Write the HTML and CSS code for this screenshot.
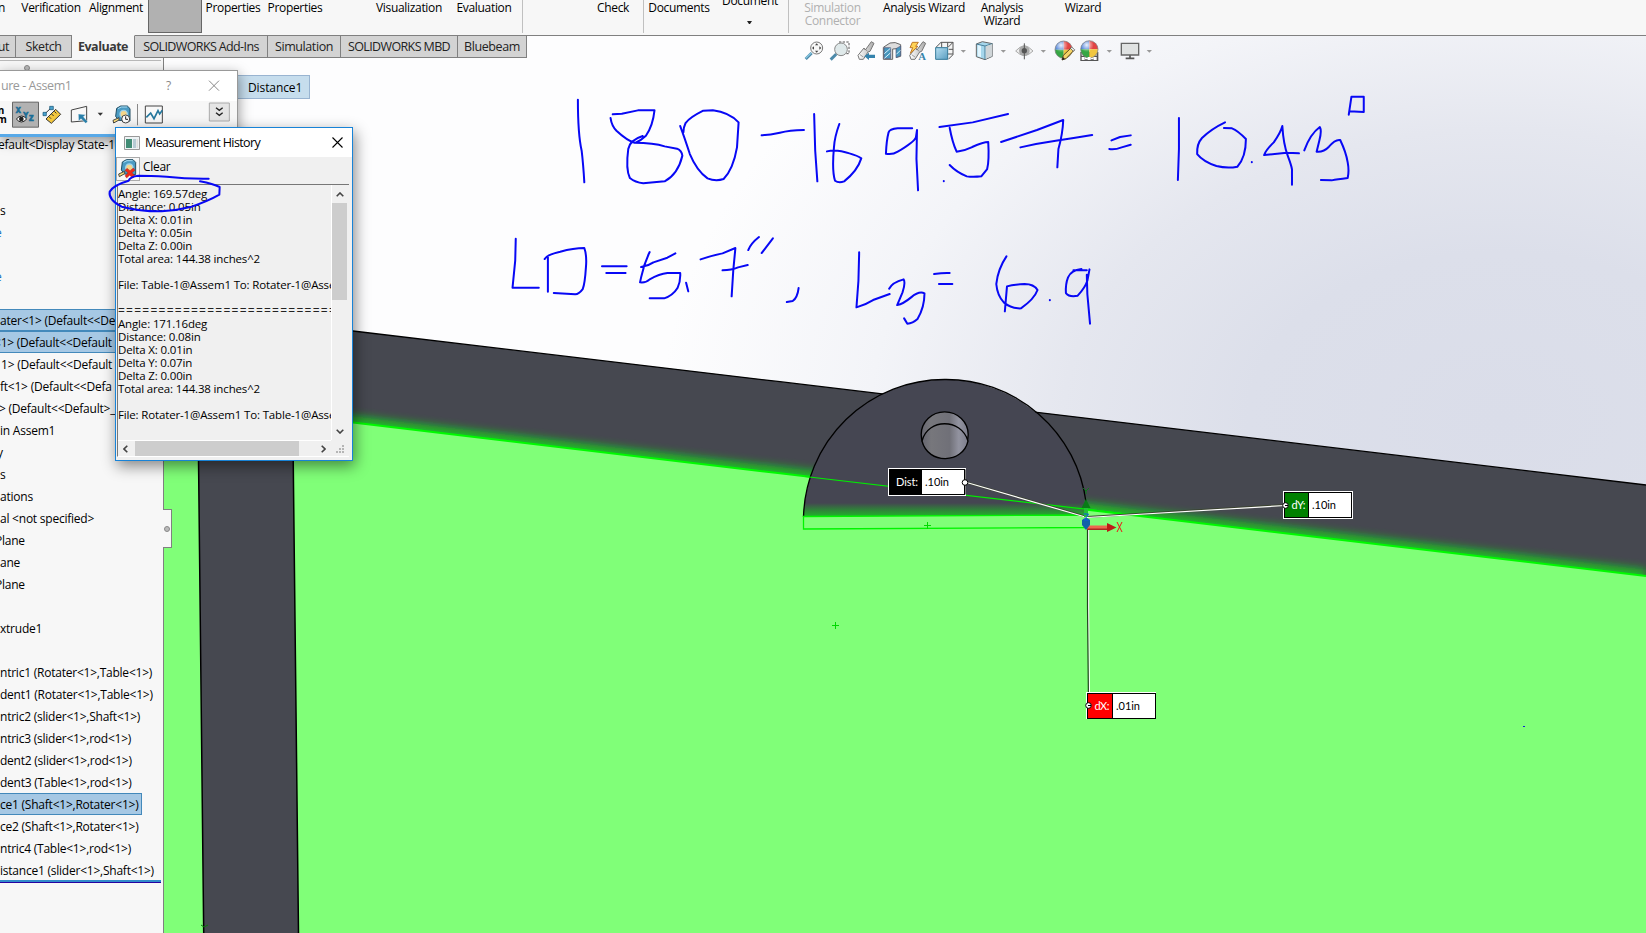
FILE: index.html
```html
<!DOCTYPE html>
<html lang="en">
<head>
<meta charset="utf-8">
<title>SOLIDWORKS - Assem1</title>
<link rel="stylesheet" href="styles.css">
</head>
<body>
<div class="app">
  <svg class="scene" viewBox="0 0 1646 933">
    <defs>
      <radialGradient id="bg" gradientUnits="userSpaceOnUse" cx="0" cy="0" r="1" gradientTransform="translate(1500 420) scale(840 560)">
        <stop offset="0" stop-color="#dadde9"/><stop offset=".3" stop-color="#dcdfea"/><stop offset=".52" stop-color="#e5e7ef"/><stop offset=".75" stop-color="#f3f4f8"/><stop offset="1" stop-color="#fdfdfe"/>
      </radialGradient>
      <linearGradient id="hole"><stop offset="0" stop-color="#65656f"/><stop offset=".2" stop-color="#77777c"/><stop offset=".6" stop-color="#707078"/><stop offset=".8" stop-color="#9293a0"/><stop offset="1" stop-color="#7c7d8b"/></linearGradient>
      <linearGradient id="plateGlow" x1="0" y1="0" x2="0" y2="1"><stop offset="0" stop-color="#00ff00" stop-opacity="0"/><stop offset="1" stop-color="#10e818" stop-opacity=".7"/></linearGradient>
      <filter id="soft" x="-5%" y="-50%" width="110%" height="200%"><feGaussianBlur stdDeviation="5"/></filter>
      <clipPath id="plate"><path d="M803.5 517A141 141 0 0 1 944.500 379.500A141 141 0 0 1 1086 517Z"/></clipPath>
    </defs>
    <rect width="1646" height="933" fill="url(#bg)"/>
    <path d="M164 308L353 331 780 381.700 1646 485V600H164Z" fill="#464850"/>
    <path d="M164 400L353 422.500 780 473.300 1380 544.500 1646 576" fill="none" stroke="#10e818" stroke-width="12" opacity=".8" filter="url(#soft)"/>
    <path d="M164 400L353 422.500 780 473.300 1380 544.500 1646 576V933H164Z" fill="#80ff78"/>
    <path d="M164 400L353 422.500 780 473.300 1380 544.500 1646 576" fill="none" stroke="#00fa00" stroke-width="2"/>
    <path d="M164 308L353 331 780 381.700 1646 485" fill="none" stroke="#000" stroke-width="1.300"/>
    <path d="M198.300 440L203.700 933H298.500L293 440Z" fill="#464850"/>
    <path d="M198.300 440L203.700 933M293 440L298.500 933" stroke="#000" stroke-width="1.500"/>
    <path d="M201 925l3 2 4-2" fill="none" stroke="#087a08"/>
    <path d="M803.500 517A141 141 0 0 1 944.500 379.500A141 141 0 0 1 1086 517Z" fill="#454652"/>
    <rect x="803" y="503" width="284" height="14" fill="url(#plateGlow)" clip-path="url(#plate)"/>
    <path d="M803.500 517A141 141 0 0 1 944.500 379.500A141 141 0 0 1 1086 502" fill="none" stroke="#000" stroke-width="1.300"/>
    <path d="M803.500 516.500L1087 515V527.500L803.500 529Z" fill="#80ff78" stroke="#00f500" stroke-width="1.300"/>
    <path d="M805 476.500L1140 515.500" stroke="#00ee00" stroke-width="1.200"/>
    <path d="M924 525.500h7m-3.500-3.500v7M832 625.500h7m-3.500-3.500v7" stroke="#00d800"/>
    <ellipse cx="944.700" cy="434.500" rx="23.500" ry="22.700" fill="url(#hole)" stroke="#000" stroke-width="1.300"/>
    <path d="M922 441C928 418 961 418 968 441C963 464 928 465 922 441Z" fill="url(#hole)" stroke="#000" stroke-width="1.300"/>
    <g fill="none">
      <path d="M965 482L1087 517L1285 505" stroke="#3b432f" stroke-width="2"/>
      <path d="M965 482L1087 517.500L1285 505.500" stroke="#fff" stroke-width="1.200"/>
      <path d="M1088.500 525V607L1089.500 705" stroke="#fff" stroke-width="1.300"/>
      <path d="M1087.500 525V607L1088.500 705" stroke="#22421f" stroke-width="1.200"/>
    </g>
    <path d="M1084 505h4v12h-4z" fill="#22c235"/><path d="M1081.500 508l4.500-9 4.500 9z" fill="#087b17"/>
    <path d="M1083 488l3 3 3-3m-3 3v3" stroke="#087b17" fill="none"/>
    <path d="M1087 525.500h22v4h-22z" fill="#ed684f"/><path d="M1087 528.500h22v1.500h-22z" fill="#a82a20"/><path d="M1107 523l9.500 4.500-9.500 4.500z" fill="#bd1a16"/>
    <path d="M1117 522l5 10m0-10l-5 10" stroke="#f21414" fill="none"/>
    <path d="M1082 520q4-4 8 0v5l-4 5-4-5z" fill="#1261a8"/><path d="M1083.500 514h5l-4 6h4" fill="none" stroke="#1057e9"/>
    <rect x="1523" y="726" width="2" height="1" fill="#1222d8"/>
    <g class="callout">
      <rect x="888.500" y="468.500" width="77" height="27" fill="#000" stroke="#fff"/><rect x="922" y="470" width="42" height="24" fill="#fff"/><path d="M922 469.500h43v25h-43" fill="none" stroke="#000"/>
      <text x="896" y="486" fill="#fff" textLength="22">Dist:</text><text x="925" y="486" textLength="24">.10in</text>
      <circle cx="965" cy="482.500" r="2.800" fill="#fff" stroke="#000"/>
      <rect x="1283.500" y="491.500" width="69" height="27" fill="#fff" stroke="#fff"/><rect x="1284.500" y="492.500" width="67" height="25" fill="#fff" stroke="#000"/><rect x="1285" y="493" width="23" height="24" fill="#008000"/><path d="M1308.500 492v26" stroke="#000"/>
      <text x="1291.500" y="509" fill="#fff" textLength="14">dY:</text><text x="1312" y="509" textLength="24">.10in</text>
      <circle cx="1285.500" cy="505.500" r="2.800" fill="#fff" stroke="#000"/><path d="M1285 505.500h3" stroke="#000"/>
      <rect x="1086.500" y="692.500" width="69" height="26" fill="#fff" stroke="#fff"/><rect x="1087.500" y="693.500" width="68" height="25" fill="#fff" stroke="#000"/><rect x="1088" y="694" width="24" height="24" fill="#f00"/><path d="M1112.500 693v26" stroke="#000"/>
      <text x="1094.500" y="710" fill="#fff" textLength="15">dX:</text><text x="1116" y="710" textLength="24">.01in</text>
      <circle cx="1088.500" cy="705.500" r="2.800" fill="#fff" stroke="#000"/><path d="M1088 705.500h3" stroke="#000"/>
    </g>
  </svg>

  <header class="ribbon">
    <span class="cut">n</span><span>Verification</span><span>Alignment</span><i class="pressed"></i><span>Properties</span><span>Properties</span>
    <b></b><span>Visualization</span><span>Evaluation</span><b></b><i class="sep"></i><b></b><span>Check</span><i class="sep"></i>
    <span>Documents</span><span class="raised">Document<em class="caret"></em></span><b></b><i class="sep"></i>
    <span class="off">Simulation<br>Connector</span><span>Analysis Wizard</span><span>Analysis<br>Wizard</span><b></b><span>Wizard</span>
  </header>
  <nav class="tabs">
    <span class="t0">ut</span><span class="t1">Sketch</span><span class="t2 active">Evaluate</span><span class="t3">SOLIDWORKS Add-Ins</span><span class="t4">Simulation</span><span class="t5">SOLIDWORKS MBD</span><span class="t6">Bluebeam</span>
  </nav>

  <svg class="headsup" viewBox="0 0 1095 105">
    <defs>
      <linearGradient id="steel"><stop offset="0" stop-color="#fff"/><stop offset="1" stop-color="#aaa"/></linearGradient>
      <linearGradient id="blue" x1="0" y1="0" x2="1" y2="1"><stop offset="0" stop-color="#b7e0f3"/><stop offset="1" stop-color="#5a9dc0"/></linearGradient>
      <radialGradient id="shine" cx=".35" cy=".25" r=".4"><stop offset="0" stop-color="#fff" stop-opacity=".9"/><stop offset="1" stop-color="#fff" stop-opacity="0"/></radialGradient>
      <g id="ball"><path d="M0 0V-26A26 26 0 0 0-26 0Z" fill="#3f78d8"/><path d="M0 0H26A26 26 0 0 0 0-26Z" fill="#e24343"/><path d="M0 0H-26A26 26 0 0 0 0 26Z" fill="#36a644"/><path d="M0 0V26A26 26 0 0 0 26 0Z" fill="#f0c640"/><circle r="26" fill="url(#shine)" stroke="#777" stroke-width="2"/></g>
      <g id="pipe"><path d="M-24 14L-6-8-2-2 16-27 24-22 12 2 6 4-8 26-20 26Z" fill="url(#steel)" stroke="#777" stroke-width="3"/><path d="M-18 12l10 7M-5-6l10 8" stroke="#777" stroke-width="2"/></g>
      <path id="dd" d="M-8-3h16l-8 8z" fill="#999"/>
    </defs>
    <path d="M32 72L50 54" stroke="#4d8aaa" stroke-width="9"/><path d="M32 70L49 53" stroke="#86c4df" stroke-width="4"/>
    <circle cx="65" cy="39" r="18" fill="#f7f7f7" stroke="#777" stroke-width="3"/><path d="M65 25l5 6H60zM65 53l5-6H60zM51 39l6-5v10zM79 39l-6-5v10z" fill="#444"/>
    <path d="M132 21h30v35h-9" fill="none" stroke="#555" stroke-width="3" stroke-dasharray="7 4"/><path d="M107 74L124 57" stroke="#4d8aaa" stroke-width="9"/><circle cx="138" cy="43" r="19" fill="#dfe9ea" stroke="#888" stroke-width="3"/>
    <use href="#pipe" x="213" y="47"/><path d="M208 64l14-11v6h18v10h-18v6z" fill="#3583ad"/>
    <path d="M265 37l20-13q15-5 32 5v35l-12 3V41l-12 1v31h-28z" fill="#ddd" stroke="#666" stroke-width="3"/><path d="M267 38h20v33h-20zM303 41l14-8v29l-14 6z" fill="#4797bd" stroke="#557" stroke-width="2"/><path d="M268 56l18-16M268 70l18-16M304 58l12-12" stroke="#d8f1ff" stroke-width="3"/>
    <use href="#pipe" x="368" y="47"/><path d="M352 22h18l-8 12h7L346 55l7-17h-8z" fill="#ffd355" stroke="#bf7926" stroke-width="3"/><text x="370" y="75" class="iconA">A</text>
    <path d="M422 38l16-16h36v37l-14 14" fill="#f5f5f5" stroke="#555" stroke-width="3"/><path d="M459 37l15-15M459 57h15M440 22v15M458 22v15M461 43h13" stroke="#555" stroke-width="3"/><path d="M422 38h36v35h-36z" fill="url(#blue)" stroke="#347a9a" stroke-width="3"/>
    <use href="#dd" x="505" y="48"/>
    <g transform="translate(540)">
      <path d="M4 27l18-7 30 6v38l-22 10-26-9z" fill="#a5d6ec" stroke="#666" stroke-width="3"/><path d="M4 27l26 6 22-7M30 33v41" fill="none" stroke="#4a7f99" stroke-width="3"/><path d="M32 34l20-7v36l-20 9z" fill="#cfd5d8"/><path d="M8 30l10 3v34l-10-3z" fill="#e2f6ff"/>
      <use href="#dd" x="85" y="48"/><path d="M122 48q26-30 52 0-26 27-52 0z" fill="#eee" stroke="#aaa" stroke-width="3"/><circle cx="148" cy="47" r="16" fill="#aaa"/><path d="M148 25v48" stroke="#555" stroke-width="3"/><circle cx="148" cy="47" r="8" fill="#555"/>
      <use href="#dd" x="205" y="48"/><use href="#ball" x="266" y="44"/><path d="M261 75l4-14 24-23 8 8-24 25z" fill="#f5d367" stroke="#55451c" stroke-width="3"/><path d="M286 40l4-4 9 8-4 5z" fill="#eee" stroke="#444" stroke-width="2"/><path d="M261 75l3-9 6 6z" fill="#222"/>
      <path d="M316 51h54v27h-54z" fill="#555"/><path d="M320 54h9v8h-9zM356 54h9v8h-9zM330 64h9v9h-9zM347 64h9v9h-9z" fill="#fff"/><use href="#ball" x="343" y="43"/>
      <path d="M320 66h9v9h-9zM338 66h9v9h-9zM356 66h9v9h-9z" fill="#fff"/>
      <use href="#dd" x="403" y="48"/><path d="M439 25h52v35h-52z" fill="#e0e2e2" stroke="#666" stroke-width="4"/><path d="M465 61v9M452 70h26" stroke="#555" stroke-width="5"/><use href="#dd" x="523" y="48"/>
    </g>
  </svg>

  <aside class="panel">
    <div class="splitter"><i class="dot"></i></div>
    <ul class="tree">
      <li class="n2">efault&lt;Display State-1</li><li></li><li></li><li>s</li><li class="link">e</li><li></li><li class="link">e</li><li></li>
      <li class="sel wide">ater&lt;1&gt; (Default&lt;&lt;De</li><li class="sel wide n5">&lt;1&gt; (Default&lt;&lt;Default</li><li class="p1">1&gt; (Default&lt;&lt;Default</li><li>ft&lt;1&gt; (Default&lt;&lt;Defa</li><li class="n1">&gt; (Default&lt;&lt;Default&gt;_</li>
      <li>in Assem1</li><li class="n3">y</li><li>s</li><li>ations</li><li>al &lt;not specified&gt;</li><li class="n4">Plane</li><li>ane</li><li class="n4">Plane</li><li></li><li>xtrude1</li><li></li>
      <li>ntric1 (Rotater&lt;1&gt;,Table&lt;1&gt;)</li><li>dent1 (Rotater&lt;1&gt;,Table&lt;1&gt;)</li><li>ntric2 (slider&lt;1&gt;,Shaft&lt;1&gt;)</li><li>ntric3 (slider&lt;1&gt;,rod&lt;1&gt;)</li><li>dent2 (slider&lt;1&gt;,rod&lt;1&gt;)</li><li>dent3 (Table&lt;1&gt;,rod&lt;1&gt;)</li>
      <li class="sel fit">ce1 (Shaft&lt;1&gt;,Rotater&lt;1&gt;)</li><li>ce2 (Shaft&lt;1&gt;,Rotater&lt;1&gt;)</li><li>ntric4 (Table&lt;1&gt;,rod&lt;1&gt;)</li><li>istance1 (slider&lt;1&gt;,Shaft&lt;1&gt;)</li>
    </ul>
    <div class="rollback"></div>
  </aside>
  <div class="handle"><i class="dot"></i></div>

  <div class="mate">Distance1</div>

  <section class="measure">
    <div class="mtitle"><span>ure - Assem1</span></div>
    <svg viewBox="0 31 714 192">
      <text x="498" y="88" class="q">?</text><path d="M627 60l30 30m0-30l-30 30" stroke="#888" stroke-width="3"/>
      <text x="-7" y="161" class="unit">n</text><text x="-9" y="188" class="unit">m</text>
      <path d="M37.500 124.500h78v75h-78z" fill="#b2b2b2" stroke="#666" stroke-width="3"/>
      <text x="47" y="158" class="xyz">X</text><text x="70" y="171" class="xyz">Y</text><text x="86" y="182" class="xyz">Z</text>
      <path d="M49 175q16-18 31 0-16 18-31 0z" fill="#fff" stroke="#222" stroke-width="3"/><circle cx="64" cy="175" r="7" fill="#222"/>
      <path d="M138 175l29-29 15 15-28 27z" fill="#f3c63c" stroke="#333" stroke-width="3"/><path d="M147 168l6 6m2-14l6 6m2-14l6 6" stroke="#333" stroke-width="3"/><path d="M134 160l21-20" stroke="#333" stroke-width="3"/><path d="M129 155h10v10h-10zM149 137h11v10h-11z" fill="#4aa3cf" stroke="#16516f" stroke-width="2"/>
      <path d="M214 148l46-11v43l-46 4z" fill="#f7f7f7" stroke="#444" stroke-width="3"/><path d="M235 160l22 2-7 6 13 15-6 5-14-14-7 7z" fill="#287fa9" stroke="#f7f7f7"/>
      <path d="M293 156h16l-8 9z" fill="#333"/>
      <g id="tape"><path d="M350 143l12-7h20l8 8v37l-34-2-9-12z" fill="#4b9bc3" stroke="#234f65" stroke-width="3"/><path d="M354 144l10-5h17" fill="none" stroke="#a9dcf2" stroke-width="3"/><circle cx="371" cy="160" r="11" fill="#f4d58a" stroke="#9fd2ea" stroke-width="4"/><path d="M339 179l18-8v7l-16 9z" fill="#ffe07a" stroke="#444" stroke-width="3"/></g>
      <circle cx="377" cy="175" r="12" fill="#fff" stroke="#444" stroke-width="3"/><path d="M377 167v9h7" stroke="#222" stroke-width="3" fill="none"/>
      <path d="M412.500 130v64" stroke="#888" stroke-width="3"/>
      <path d="M436 136h51v51h-51z" fill="#f8f8f8" stroke="#444" stroke-width="3"/><path d="M439 170l13-13 10 17 12-24 5 10 8-11" fill="none" stroke="#24779d" stroke-width="5"/>
      <path d="M628 127h60v54h-60z" fill="#e5e5e5" stroke="#aaa" stroke-width="3"/><path d="M648 141l10 8 10-8m-20 15l10 8 10-8" fill="none" stroke="#222" stroke-width="4"/>
    </svg>
  </section>

  <section class="history">
    <div class="htitle">
      <svg class="hicon" viewBox="0 0 16 14"><path d="M.5.500h15v13H.500z" fill="#eef3f5" stroke="#999"/><path d="M2 3h6v9H2z" fill="#418c75"/><path d="M9 3h3v9H9z" fill="#b6cbd4"/><path d="M12.500 3H14v9h-1.500z" fill="#ddd"/></svg>
      <span>Measurement History</span>
      <svg class="hclose" viewBox="0 0 11 11"><path d="M.5.500l10 10m0-10l-10 10" stroke="#000" stroke-width="1.100"/></svg>
    </div>
    <div class="hbar"><span class="clearbtn"><svg viewBox="334 132 66 64"><use href="#tape"/><path d="M364 162l9 7 10-8 5 7-9 7 9 9-7 7-9-8-9 8-5-7 9-8-9-8z" fill="#ed2c1a" stroke="#8d1308"/></svg></span><span>Clear</span></div>
    <div class="hbody">
      <pre>Angle: 169.57deg
Distance: 0.05in
Delta X: 0.01in
Delta Y: 0.05in
Delta Z: 0.00in
Total area: 144.38 inches^2

File: Table-1@Assem1 To: Rotater-1@Asse

<span class="rule">===========================</span>
Angle: 171.16deg
Distance: 0.08in
Delta X: 0.01in
Delta Y: 0.07in
Delta Z: 0.00in
Total area: 144.38 inches^2

File: Rotater-1@Assem1 To: Table-1@Asse</pre>
      <div class="vscroll"><svg viewBox="0 0 8 5"><path d="M.7 4.300L4 1l3.300 3.300"/></svg><i></i><svg viewBox="0 0 8 5"><path d="M.7.700L4 4 7.300.700"/></svg></div>
      <div class="hscroll"><svg viewBox="0 0 5 8"><path d="M4.300.700L1 4l3.300 3.300"/></svg><i></i><svg viewBox="0 0 5 8"><path d="M.7.700L4 4 .7 7.300"/></svg></div>
      <svg class="grip" viewBox="0 0 8 8"><path d="M6 0h2v2H6zM3 3h2v2H3zM6 3h2v2H6zM0 6h2v2H0zM3 6h2v2H3zM6 6h2v2H6z"/></svg>
    </div>
  </section>

  <svg class="ink" viewBox="0 0 1646 933">
    <g transform="translate(549.500 80.700) scale(.5357 .33333)">
      <path d="M53 57Q53 160 60 210Q63 250 65 305"/>
      <path d="M118 101L135 99 165 89 196 89Q193 135 180 165Q170 180 160 187Q145 180 125 150Q116 135 114 112M174 166Q150 178 147 205Q142 265 150 292Q160 305 175 308L215 302Q240 280 248 225Q247 210 238 204L215 197Q195 186 158 186"/>
      <path d="M244 136Q252 170 262 220Q275 270 295 293Q310 303 325 295Q343 265 350 200L353 125Q335 95 305 89L287 90Q262 110 254 127Q250 140 250 155"/>
      <path d="M396 164Q412 163 430 156T475 148M494 100L496 210 500 302M541 130Q532 170 531 200Q527 270 533 300Q540 308 550 302Q575 270 582 233Q575 225 560 218Q535 204 518 212"/>
      <path d="M677 143H650Q635 145 633 155Q629 180 628 219Q640 223 650 213Q680 185 684 170L686 148 685 235 688 329M736 301v1"/>
      <path d="M728 139L790 125 856 100M747 141Q752 185 760 213Q775 210 789 199Q810 184 819 184Q821 240 817 265L806 287Q790 290 779 287Q760 275 747 253"/>
      <path d="M843 184L910 148 959 118Q958 160 950 205L948 260M879 200Q910 188 945 180T1013 163"/>
      <path d="M1049 179L1065 169 1085 164M1045 205Q1055 208 1068 200L1085 192M1175 112V205L1173 298"/>
      <path d="M1261 125Q1235 145 1218 172Q1208 190 1209 220Q1220 242 1245 256Q1265 264 1284 258Q1300 230 1300 175Q1285 150 1274 143L1259 142M1311 244v1"/>
      <path d="M1399 218L1376 216 1334 223Q1337 208 1352 185Q1365 155 1368 136Q1370 190 1378 225Q1385 255 1386 266V312M1409 209Q1420 160 1438 139Q1442 150 1437 180L1432 213Q1445 215 1455 198Q1467 175 1476 178Q1487 215 1490 245Q1493 270 1490 292Q1470 296 1460 299L1440 298"/>
      <path d="M1492 102L1497 48H1520V94L1493 92"/>
      <path d="M-63 474L-64 540-69 621H-20M-3 530V633M-9 535Q-5 522 20 513Q45 502 65 502Q70 525 68 560Q66 610 62 625Q55 640 48 641L8 637"/>
      <path d="M98 557h46M106 577h36M187 514Q176 550 171 590L169 605Q180 607 187 596Q205 580 220 577H244Q245 600 239 622Q230 645 214 653H187M171 559Q184 556 194 545L220 531 235 518M255 606L259 632"/>
      <path d="M282 536Q305 524 323 518L347 502 343 570 340 647M323 569Q340 568 352 560L370 553M391 469Q376 488 371 508M417 473L396 517M465 622Q463 650 454 661L443 664"/>
      <path d="M578 515Q578 600 573 680Q590 672 604 658L635 640M634 624Q640 605 661 596Q665 605 659 635L649 673Q660 670 675 650T700 638Q700 680 687 715Q678 728 668 729L662 713M718 580Q735 576 747 577M727 610h25"/>
      <path d="M853 527Q837 565 834 610Q836 645 848 665Q862 684 880 683Q905 655 911 628Q904 610 887 610Q865 612 854 617L850 692M934 658v1"/>
      <path d="M1003 569H978M993 565Q974 568 968 590Q963 610 964 637Q970 650 986 645Q1000 620 1004 600L1008 566M1003 582L1004 640 1009 729"/>
    </g>
    <g transform="translate(0 60) scale(.33333)"><path d="M626 356Q560 357 500 350Q450 347 415 347Q390 350 386 362Q340 375 329 395Q325 420 365 440Q425 455 485 454Q530 451 575 440Q625 423 658 404L659 381Q640 372 600 364"/></g>
  </svg>
</div>
</body>
</html>
```
FILE: styles.css
```css
* { box-sizing: border-box; }
body { margin: 0; overflow: hidden; font: 12px/14px "Open Sans", "Noto Sans", sans-serif; color: #000; }
.app { position: relative; width: 1646px; height: 933px; overflow: hidden; }
.scene { position: absolute; inset: 0; width: 1646px; height: 933px; }
.callout text { font: 11px Lato, sans-serif; }

.ribbon { position: relative; height: 36px; background: #f7f7f7; border-bottom: 1px solid #808080; overflow: hidden; display: grid;
  grid-template-columns: 18px 66px 64px 54px 62px 62px 43px 80px 70px 3px 1px 60px 60px 1px 70px 72px 2px 1px 87px 96px 60px 21px 60px; }
.ribbon span { text-align: center; white-space: nowrap; line-height: 13px; padding-top: 1px; letter-spacing: -.32px; justify-self: center; }
.ribbon .cut { justify-self: start; margin-left: -2px; }
.ribbon .off { color: #b0b0b0; }
.ribbon .raised { margin-top: -7px; }
.pressed { height: 33px; background: #b1b1b1; border: 1px solid #666; border-top: 0; }
.sep { height: 33px; background: #c0c0c0; }
.caret { display: block; margin: 14px auto 0; width: 5px; border: 2.500px solid transparent; border-top: 3px solid #222; border-bottom: 0; transform: translateX(-1px); }

.tabs { position: relative; display: flex; height: 23px; margin-top: -1px; width: 527px; font-size: 12.500px; }
.tabs span { border: 1px solid #808080; border-left: 0; background: #d3d3d3; color: #222; line-height: 22px; text-align: center; white-space: nowrap; letter-spacing: -.4px; }
.tabs .active { background: #f7f7f7; border-top-color: #f7f7f7; border-bottom-color: #f7f7f7; font-weight: 700; color: #3a3a3a; letter-spacing: -.52px; }
.t0 { width: 16px; text-indent: -8px; } .t1 { width: 56px; } .t2 { width: 63px; } .t3 { width: 133px; } .t4 { width: 73px; } .t5 { width: 117px; } .t6 { width: 69px; }
.tabs .t3, .tabs .t5 { letter-spacing: -.62px; }

.headsup { position: absolute; left: 795px; top: 35px; width: 365px; height: 35px; }
.iconA { font: bold 32px "Liberation Serif", serif; fill: #3684aa; }

.panel { position: relative; width: 164px; height: 875px; background: #f7f7f7; border-right: 1px solid #808080; }
.splitter { height: 75px; padding: 6px 0 0 24px; border-top: 1px solid #f7f7f7; background: linear-gradient(#b8b8b8, #b8b8b8) 0 1px / 161px 1px no-repeat; }
.dot { display: block; width: 6px; height: 6px; border-radius: 50%; background: #bbb; border: 1px solid #888; }
.tree { list-style: none; margin: 0; padding: 0; }
.tree li { height: 22px; line-height: 21px; white-space: nowrap; border: 1px solid transparent; border-left: 0; letter-spacing: -.23px; }
.tree .sel { background: #a6c8e4; border-color: #4389bb; }
.tree .fit { width: 142px; }
.tree .link { color: #1874c0; text-indent: -5px; }
.n1 { text-indent: -1px; } .n2 { text-indent: -2px; } .n3 { text-indent: -3px; } .n4 { text-indent: -5px; } .n5 { text-indent: -6px; } .p1 { text-indent: 1px; }
.rollback { width: 161px; height: 3px; margin-top: -1px; background: #328bca; border-bottom: 1px solid #2600a0; }
.handle { position: absolute; left: 163px; top: 509px; width: 9px; height: 39px; padding: 16px 0 0 1px; background: #f7f7f7; border: 1px solid #808080; border-left: 0; }

.mate { position: absolute; left: 228px; top: 75px; width: 82px; height: 24px; padding-left: 19px; line-height: 24px; letter-spacing: -.1px; background: #c6dded; border: 1px solid #99b4d1; }
.measure { position: absolute; left: -1px; top: 70px; width: 239px; height: 67px; background: #f7f7f7; border: 1px solid #999; border-bottom: 3px solid #58a9e8; box-shadow: 1px 4px 12px #0006; }
.mtitle { height: 30px; background: #fff; color: #999; padding: 8px 0 0 1px; font-size: 12.500px; letter-spacing: -.45px; }
.measure svg { position: absolute; left: 0; top: 0; width: 238px; height: 64px; }
.q { font: 36px "Open Sans", sans-serif; fill: #888; }
.unit { font: bold 30px "Open Sans", sans-serif; }
.xyz { font: bold 25px "Liberation Mono", monospace; fill: #1b6d96; stroke: #1b6d96; stroke-width: 2px; }

.history { position: absolute; left: 115px; top: 127px; width: 238px; height: 334px; padding-bottom: 1px; background: #f0f0f0; border: 1px solid #1883d7; box-shadow: 2px 5px 14px #0007; display: flex; flex-direction: column; }
.htitle { height: 30px; background: #fff; display: flex; align-items: center; padding: 1px 9px 0 8px; font-size: 12.500px; letter-spacing: -.72px; letter-spacing: -.6px; }
.hicon { width: 16px; height: 14px; margin-right: 5px; }
.hclose { width: 11px; height: 11px; margin-left: auto; }
.hbar { height: 27px; display: flex; align-items: flex-start; gap: 3px; line-height: 20px; letter-spacing: -.3px; }
.clearbtn { width: 24px; height: 24px; border: 1px solid #aaa; background: #f8f8f8; }
.clearbtn svg { display: block; width: 22px; height: 22px; }
.hbody { flex: 1; margin: 0 3px 3px 1px; border-top: 1px solid #777; border-left: 1px solid #777; border-bottom: 1px solid #fff; display: grid; grid-template: 255px 1fr / 213px 18px; }
.history .hbody { margin-top: 1px; margin-bottom: 2px; }
.hbody pre { margin: 0; padding: 2px 0 0; overflow: hidden; font: 11.500px/13px "Open Sans", sans-serif; letter-spacing: -.15px; }
.rule { display: inline-block; height: 13px; letter-spacing: 1.250px; font-size: 12px; color: #222; vertical-align: top; }
.hbody svg path { fill: none; stroke: #444; stroke-width: 1.600; }
.vscroll { display: flex; flex-direction: column; align-items: center; padding: 7px 3px 6px 1px; border-left: 1px solid #fff; }
.vscroll svg { width: 8px; height: 5px; }
.vscroll i { width: 15px; height: 97px; margin: 6px 0 auto; background: #cdcdcd; }
.hscroll { display: flex; align-items: center; padding: 0 5px; border-top: 1px solid #fff; }
.hscroll svg { width: 5px; height: 8px; }
.hscroll i { width: 164px; height: 15px; margin: 0 auto 0 7px; background: #cdcdcd; }
.hbody .grip { width: 8px; height: 8px; align-self: end; margin: 0 0 3px 5px; }
.hbody .grip path { fill: #b5b5b5; stroke: none; }

.ink { position: absolute; inset: 0; width: 1646px; height: 933px; pointer-events: none; }
.ink path { fill: none; stroke: #0808f5; stroke-width: 2; stroke-linecap: round; stroke-linejoin: round; vector-effect: non-scaling-stroke; }
```
